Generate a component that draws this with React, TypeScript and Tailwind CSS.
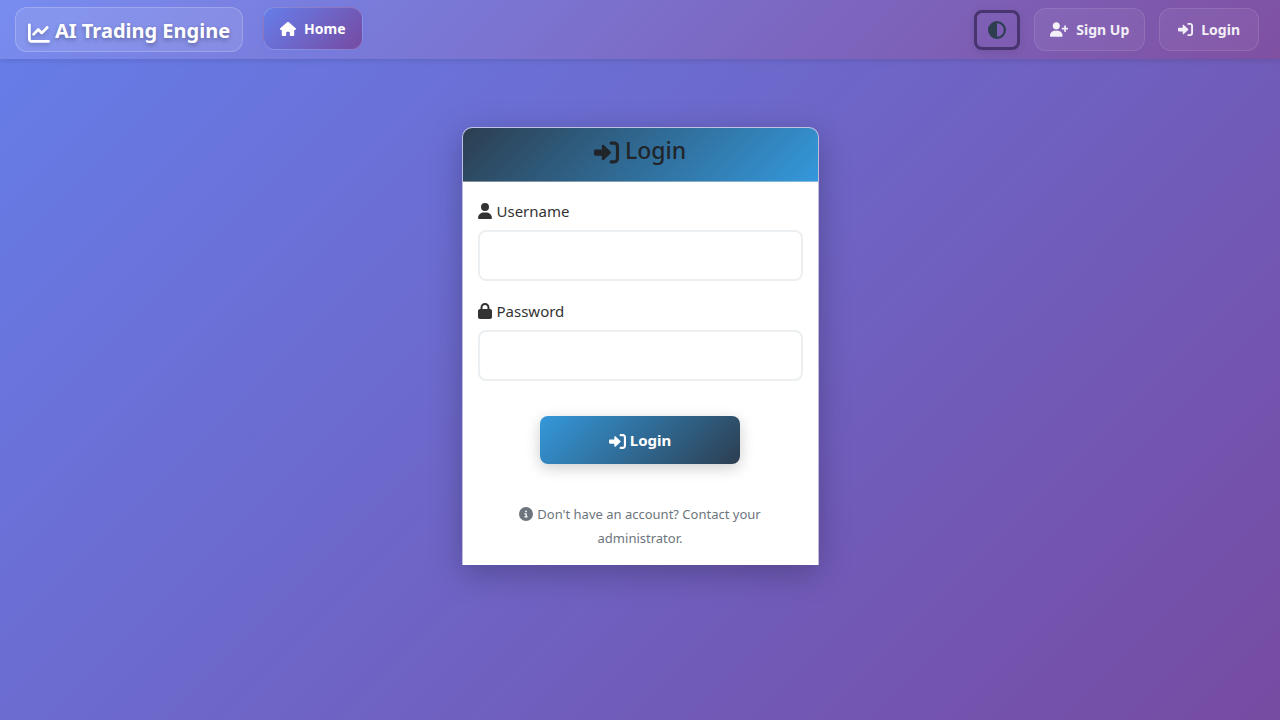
import {
  FaChartLine,
  FaCircleHalfStroke,
  FaCircleInfo,
  FaHouse,
  FaLock,
  FaUser,
} from "react-icons/fa6";

function SignInIcon({ className }: { className: string }) {
  return (
    <svg viewBox="0 0 512 512" fill="currentColor" aria-hidden="true" className={className}>
      <path d="M344.7 238.5l-144.1-136C193.7 95.97 183.4 94.17 174.6 97.95C165.8 101.8 160.1 110.4 160.1 120V192H32.02C14.33 192 0 206.3 0 224v64c0 17.68 14.33 32 32.02 32h128.1v72c0 9.578 5.707 18.25 14.51 22.05c8.803 3.781 19.03 1.984 26-4.594l144.1-136C354.3 264.6 354.3 247.4 344.7 238.5zM416 32h-64c-17.67 0-32 14.33-32 32s14.33 32 32 32h64c17.67 0 32 14.33 32 32v256c0 17.67-14.33 32-32 32h-64c-17.67 0-32 14.33-32 32s14.33 32 32 32h64c53.02 0 96-42.98 96-96V128C512 74.98 469 32 416 32z" />
    </svg>
  );
}

function UserPlusIcon({ className }: { className: string }) {
  return (
    <svg viewBox="0 0 640 512" fill="currentColor" aria-hidden="true" className={className}>
      <path d="M224 256c70.7 0 128-57.31 128-128S294.7 0 224 0C153.3 0 96 57.31 96 128S153.3 256 224 256zM274.7 304H173.3C77.61 304 0 381.6 0 477.3C0 496.5 15.52 512 34.66 512h378.7C432.5 512 448 496.5 448 477.3C448 381.6 370.4 304 274.7 304z" />
      <path
        d="M536 132v184M444 224h172"
        fill="none"
        stroke="currentColor"
        strokeWidth="60"
        strokeLinecap="round"
      />
    </svg>
  );
}

const navLink =
  "flex h-[43px] items-center gap-2 rounded-xl border text-sm font-bold";

function Navbar() {
  return (
    <nav className="flex h-[59px] items-center bg-linear-135/srgb from-[#788cf0] to-[#7f50a2] pr-[21px] pl-[15px] shadow-[0_2px_5px_rgba(0,0,0,0.1)]">
      <a
        href="#"
        className="flex h-[45px] items-center gap-[5px] rounded-xl border border-white/20 bg-white/10 px-3 pt-0.5 text-xl font-bold text-white text-shadow-[0_2px_4px_rgba(0,0,0,0.3)]"
      >
        <FaChartLine className="mt-1 size-[22px] drop-shadow-[0_2px_2px_rgba(0,0,0,0.2)]" />
        AI Trading Engine
      </a>
      <a
        href="#"
        className={`${navLink} mb-0.5 ml-5 border-white/20 bg-linear-135/srgb from-[#667eea] to-[#764ba2] px-4 text-white shadow-[0_2px_8px_rgba(102,126,234,0.3)]`}
      >
        <FaHouse className="size-4" />
        Home
      </a>
      <div className="ml-auto flex items-center gap-[14px]">
        <button
          type="button"
          aria-label="Toggle theme"
          className="flex h-10 w-[46px] items-center justify-center rounded-lg border-3 border-[#48346f] text-[#2c3e50] shadow-[0_2px_8px_rgba(0,0,0,0.1)]"
        >
          <FaCircleHalfStroke className="size-[18px]" />
        </button>
        <a href="#" className={`${navLink} border-white/10 bg-white/5 px-[15px] text-white/90`}>
          <UserPlusIcon className="h-[15px] w-[18px]" />
          Sign Up
        </a>
        <a href="#" className={`${navLink} border-white/10 bg-white/5 px-[18px] text-white/90`}>
          <SignInIcon className="size-[15px]" />
          Login
        </a>
      </div>
    </nav>
  );
}

const inputStyle =
  "mt-[7px] block h-[51px] w-full rounded-lg border-2 border-[#eceff1] bg-white px-4 text-base outline-none focus:border-[#3498db]";

const labelStyle = "flex h-6 items-center gap-[5px] text-[15px] text-[#333]";

export default function App() {
  return (
    <div className="min-h-screen bg-linear-135/srgb from-[#667eea] to-[#764ba2] font-['Noto_Sans',sans-serif]">
      <Navbar />
      <main className="px-4 pt-[68px]">
        <section className="mx-auto w-full max-w-[357px] rounded-t-[10px] border border-b-0 border-white/60 bg-white bg-clip-padding shadow-[0_8px_32px_rgba(0,0,0,0.25)]">
          <header className="flex h-[54px] justify-center rounded-t-[9px] border-b border-white/40 bg-linear-135/srgb from-[#2c3e50] to-[#3498db] pt-1.5">
            <h1 className="flex h-8 items-center gap-1.5 text-[23px] font-medium text-[#212529]">
              <SignInIcon className="mt-1 size-[25px]" />
              Login
            </h1>
          </header>
          <form className="px-[15px] pt-[17px] pb-[15px]">
            <div>
              <label htmlFor="username" className={labelStyle}>
                <FaUser className="h-4 w-[14px]" />
                Username
              </label>
              <input id="username" type="text" className={inputStyle} />
            </div>
            <div className="mt-[18px]">
              <label htmlFor="password" className={labelStyle}>
                <FaLock className="h-4 w-[14px]" />
                Password
              </label>
              <input id="password" type="password" className={inputStyle} />
            </div>
            <button
              type="submit"
              className="mx-auto mt-[35px] flex h-12 w-[200px] items-center justify-center gap-1 rounded-lg bg-linear-135/srgb from-[#3498db] to-[#2c3e50] text-[15px] font-bold text-white shadow-[0_4px_15px_rgba(0,0,0,0.2)]"
            >
              <SignInIcon className="mt-0.5 size-[17px]" />
              Login
            </button>
            <p className="mx-auto mt-[38px] w-[270px] text-center text-[13px] leading-6 text-[#6c757d]">
              <FaCircleInfo className="mr-1 inline size-[14px] align-[-2px]" />
              Don't have an account? Contact your administrator.
            </p>
          </form>
        </section>
      </main>
    </div>
  );
}
